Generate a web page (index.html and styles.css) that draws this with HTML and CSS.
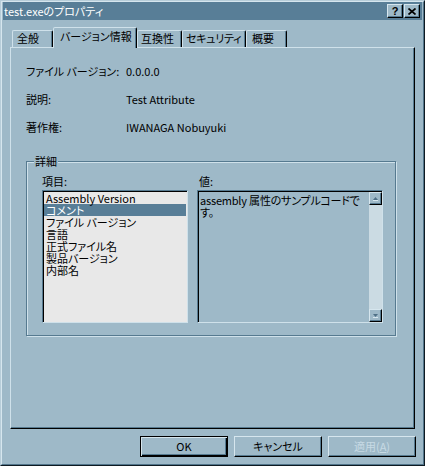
FILE: index.html
```html
<!DOCTYPE html>
<html lang="ja">
<head>
<meta charset="utf-8">
<title>test.exeのプロパティ</title>
<link rel="stylesheet" href="styles.css">
</head>
<body>
<div class="window">
  <div class="frame">
    <div class="titlebar">
      <span class="title">test.exeのプロパティ</span>
      <div class="caption-btns">
        <span class="cbtn help">?</span>
        <span class="cbtn close"><svg width="8" height="7" viewBox="0 0 8 7"><path d="M0.5 0.5L7.5 6.5M7.5 0.5L0.5 6.5" stroke="#000" stroke-width="1.7" fill="none"/></svg></span>
      </div>
    </div>
    <div class="tabs">
      <div class="tab t1">全般</div>
      <div class="tab t2 active">バージョン情報</div>
      <div class="tab t3">互換性</div>
      <div class="tab t4">セキュリティ</div>
      <div class="tab t5">概要</div>
    </div>
    <div class="panel">
      <div class="info">
        <div class="row"><span class="lbl">ファイル バージョン:</span><span class="val">0.0.0.0</span></div>
        <div class="row"><span class="lbl">説明:</span><span class="val">Test Attribute</span></div>
        <div class="row"><span class="lbl">著作権:</span><span class="val">IWANAGA Nobuyuki</span></div>
      </div>
      <fieldset class="group">
        <legend>詳細</legend>
        <div class="details">
          <div class="col-label">項目:</div>
          <div class="col-label">値:</div>
          <ul class="listbox">
            <li>Assembly Version</li>
            <li class="selected">コメント</li>
            <li>ファイル バージョン</li>
            <li>言語</li>
            <li>正式ファイル名</li>
            <li>製品バージョン</li>
            <li>内部名</li>
          </ul>
          <div class="valuebox">
            <div class="valuetext">assembly 属性のサンプルコードで<br>す。</div>
            <div class="scrollbar">
              <span class="sbtn"><svg width="5" height="4" viewBox="0 0 5 4"><path d="M2.5 0L5 3H0z" fill="#4f7086"/><path d="M0 3.5H5" stroke="#d6e6ee" stroke-width="1"/></svg></span>
              <span class="sbtn"><svg width="5" height="4" viewBox="0 0 5 4"><path d="M0 0H5L2.5 3z" fill="#4f7086"/><path d="M0 3.5H5" stroke="#d6e6ee" stroke-width="1"/></svg></span>
            </div>
          </div>
        </div>
      </fieldset>
    </div>
    <div class="buttons">
      <div class="btn default">OK</div>
      <div class="btn">キャンセル</div>
      <div class="btn disabled">適用(<u>A</u>)</div>
    </div>
  </div>
</div>
</body>
</html>
```

FILE: styles.css
```css
* { box-sizing: border-box; }
html, body { margin: 0; padding: 0; }
body {
  width: 425px;
  height: 466px;
  overflow: hidden;
  background: #9eb9c8;
  font-family: "Noto Sans CJK JP", "Liberation Sans", sans-serif;
  font-size: 11px;
  font-feature-settings: "palt";
  color: #000;
}
.window {
  width: 425px;
  height: 466px;
  border: 1px solid;
  border-color: #b7cdd9 #0e1a22 #0e1a22 #b7cdd9;
}
.frame {
  height: 100%;
  border: 1px solid;
  border-color: #d6e6ee #52758b #52758b #d6e6ee;
  padding: 0 1px 1px 1px;
  display: flex;
  flex-direction: column;
}
.titlebar {
  height: 18px;
  flex: none;
  background: #587e97;
  color: #fff;
  display: flex;
  align-items: center;
  justify-content: space-between;
  padding: 0 2px 0 1px;
  line-height: 14px;
}
.caption-btns { display: flex; gap: 1px; }
.cbtn {
  width: 16px;
  height: 14px;
  background: #9eb9c8;
  border: 1px solid;
  border-color: #d6e6ee #000 #000 #d6e6ee;
  box-shadow: inset -1px -1px 0 #567a90;
  display: flex;
  align-items: center;
  justify-content: center;
  color: #000;
  font-family: "Liberation Sans", sans-serif;
  font-weight: bold;
  font-size: 11px;
  line-height: 11px;
}
.tabs {
  height: 27px;
  flex: none;
  display: flex;
  align-items: flex-end;
  padding-left: 9px;
}
.tab {
  height: 17px;
  border: 1px solid;
  border-bottom: none;
  border-color: #cfe1ea #000 transparent #cfe1ea;
  box-shadow: inset -1px 0 0 #567a90;
  border-radius: 2px 2px 0 0;
  padding-top: 1px;
  line-height: 13px;
  white-space: nowrap;
  overflow: hidden;
}
.tab.active {
  height: 21px;
  margin-bottom: -1px;
  position: relative;
  z-index: 1;
  background: #9eb9c8;
  padding-top: 2px;
}
.t1 { width: 41px; padding-left: 4px; }
.t2 { width: 84px; padding-left: 6px; }
.t3 { width: 45px; padding-left: 3px; }
.t4 { width: 64px; padding-left: 3px; letter-spacing: -0.3px; }
.t5 { width: 41px; padding-left: 5px; }
.panel {
  flex: none;
  margin: 0 7px 0 7px;
  height: 382px;
  border: 1px solid;
  border-color: #cfe1ea #000 #000 #cfe1ea;
  box-shadow: inset -1px -1px 0 #567a90;
  padding: 16px 15px 0 15px;
}
.info { display: flex; flex-direction: column; gap: 14px; }
.row { display: flex; height: 14px; line-height: 14px; white-space: nowrap; }
.lbl { width: 100px; flex: none; }
.group {
  margin: 21px 0 0 0;
  width: 370px;
  min-width: 0;
  padding: 0;
  border: 1px solid #567a90;
  box-shadow: 1px 1px 0 #cfe1ea, inset 1px 1px 0 #cfe1ea;
}
.group legend {
  margin-left: 7px;
  padding: 0 1px;
  line-height: 12px;
  background: #9eb9c8;
}
.details {
  display: grid;
  grid-template-columns: 146px 186px;
  column-gap: 9px;
  padding: 8px 0 12px 15px;
}
.col-label { line-height: 13px; margin-bottom: 2px; }
.col-label:nth-child(2) { padding-left: 2px; }
.listbox {
  list-style: none;
  margin: 0;
  height: 133px;
  padding: 1px 1px 0 1px;
  background: #e8e8e8;
  border: 1px solid;
  border-color: #567a90 #cfe1ea #cfe1ea #567a90;
  box-shadow: inset 1px 1px 0 #000;
}
.listbox li {
  height: 12px;
  line-height: 12px;
  padding-left: 2px;
  white-space: nowrap;
}
.listbox li.selected { background: #587e97; color: #fff; }
.valuebox {
  height: 133px;
  display: flex;
  background: #9eb9c8;
  border: 1px solid;
  border-color: #567a90 #cfe1ea #cfe1ea #567a90;
  box-shadow: inset 1px 1px 0 #000;
  padding: 1px 0 0 1px;
}
.valuetext {
  flex: 1;
  min-width: 0;
  padding: 2px 0 0 1px;
  line-height: 12px;
  white-space: nowrap;
  letter-spacing: -0.2px;
  overflow: hidden;
}
.scrollbar {
  width: 13px;
  flex: none;
  display: flex;
  flex-direction: column;
  justify-content: space-between;
  background: #cbdbe3;
}
.sbtn {
  width: 13px;
  height: 13px;
  background: #9eb9c8;
  border: 1px solid;
  border-color: #d6e6ee #000 #000 #d6e6ee;
  box-shadow: inset -1px -1px 0 #567a90;
  display: flex;
  align-items: center;
  justify-content: center;
}
.sbtn svg { display: block; }
.buttons {
  flex: none;
  display: flex;
  justify-content: flex-end;
  gap: 6px;
  margin-top: 7px;
  padding-right: 6px;
}
.btn {
  width: 88px;
  height: 21px;
  border: 1px solid;
  border-color: #d6e6ee #000 #000 #d6e6ee;
  box-shadow: inset -1px -1px 0 #567a90;
  display: flex;
  align-items: center;
  justify-content: center;
  line-height: 13px;
  white-space: nowrap;
}
.btn.default {
  border-color: #000;
  box-shadow: inset 1px 1px 0 #d6e6ee, inset -1px -1px 0 #000, inset -2px -2px 0 #567a90;
}
.btn.disabled { color: #c7dae4; }
```
